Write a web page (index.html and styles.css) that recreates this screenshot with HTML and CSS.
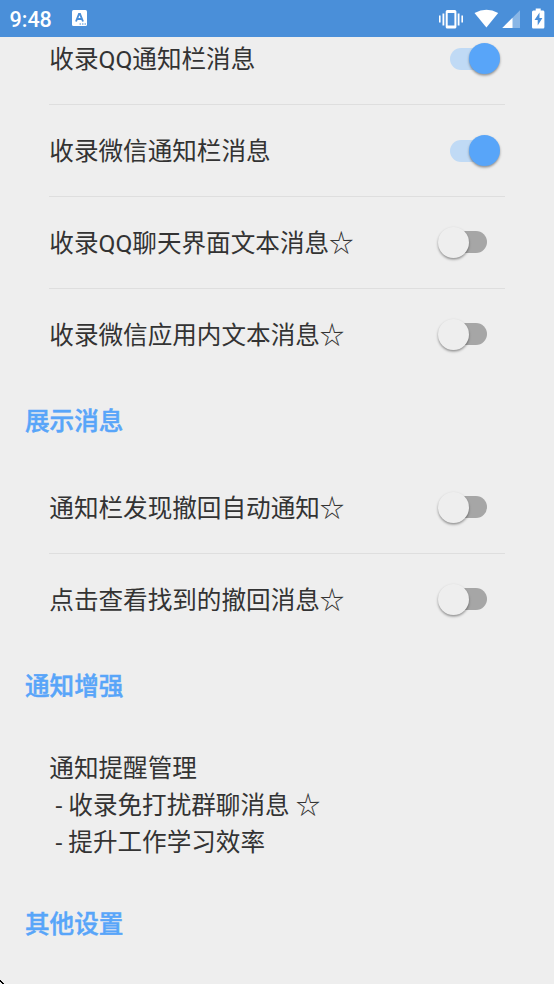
FILE: index.html
```html
<!DOCTYPE html>
<html lang="zh-CN">
<head>
<meta charset="utf-8">
<title>设置</title>
<link rel="stylesheet" href="styles.css">
</head>
<body>
<header class="status">
  <span class="clock">9:48</span>
  <svg class="app-icon" width="15" height="16" viewBox="0 0 15 16">
    <rect width="15" height="16" rx="1.5" fill="#fff"/>
    <path d="M4 11.500 7 4h1l3 7.500M5.200 9h4.600" fill="none" stroke="#4a8fd9" stroke-width="1.900"/>
    <path d="M7.500 14h1.500m1 0h1.500m1 0h1.500" stroke="#4a8fd9" stroke-width="1.200"/>
  </svg>
  <svg class="indicators" width="108" height="22" viewBox="0 0 108 22">
    <g fill="#fff">
      <path d="M1 7.500h1.600v7H1zM4.500 5.500h1.800v12H4.500zM19.700 5.500h1.800v12h-1.800zM23.400 7.500H25v7h-1.600z"/>
      <path fill-rule="evenodd" d="M9.300 2h7.500q1.600 0 1.600 1.600v15.300q0 1.600-1.600 1.600H9.300q-1.600 0-1.600-1.600V3.600Q7.700 2 9.300 2zM9.700 5v12.500h6.700V5z"/>
      <path d="M36.500 5Q48.500-1.500 60.200 5L48.400 19.500z"/>
      <path opacity=".35" d="M82 2.300V20H64.300z"/>
      <path d="M74.500 9.800V20H64.300z"/>
      <path transform="translate(.7 0)" fill-rule="evenodd" d="M97 .5h5v2h2.500q1.200 0 1.200 1.500v15q0 1.500-1.200 1.500h-10q-1.200 0-1.200-1.500V4q0-1.500 1.500-1.500H97zM100.800 4.500 95.800 12h3.200v5.500l4.700-7.500h-2.900z"/>
    </g>
  </svg>
</header>
<main class="settings">
  <section class="group group-scrolled">
    <div class="row"><span>收录QQ通知栏消息</span><i class="switch on"></i></div>
    <div class="row"><span>收录微信通知栏消息</span><i class="switch on"></i></div>
    <div class="row"><span>收录QQ聊天界面文本消息☆</span><i class="switch"></i></div>
    <div class="row"><span>收录微信应用内文本消息☆</span><i class="switch"></i></div>
  </section>
  <h2>展示消息</h2>
  <section class="group">
    <div class="row"><span>通知栏发现撤回自动通知☆</span><i class="switch"></i></div>
    <div class="row"><span>点击查看找到的撤回消息☆</span><i class="switch"></i></div>
  </section>
  <h2>通知增强</h2>
  <p class="note">通知提醒管理
 - 收录免打扰群聊消息 ☆
 - 提升工作学习效率</p>
  <h2>其他设置</h2>
</main>
<svg class="corner" width="4" height="4" viewBox="0 0 4 4"><path d="M0 0h1v1h1v1h1v1h1v1H2V3H1V2H0z"/></svg>
</body>
</html>
```
FILE: styles.css
```css
* { box-sizing: border-box; }
body {
  margin: 0;
  height: 984px;
  overflow: hidden;
  background: #eee;
  color: #333;
  font: 24.6px/36.6px Roboto, "Noto Sans CJK SC", sans-serif;
}
.status {
  display: flex;
  align-items: center;
  position: relative;
  z-index: 1;
  height: 37px;
  padding: 0 8px 0 9.5px;
  background: #4a8fd9;
  color: #fff;
}
.clock { width: 62.5px; font-size: 21.5px; font-weight: 500; line-height: 37px; padding-top: 1px; }
.app-icon { margin-top: -1px; }
.indicators { margin-left: auto; }
.group { padding: 0 49px; }
.group-scrolled { margin-top: -23.7px; }
.row {
  display: flex;
  align-items: center;
  justify-content: space-between;
  height: 91.8px;
  padding: 0 18px 0 .3px;
  border-bottom: 1.5px solid #dedede;
}
.row span { padding-top: 3.4px; }
.row:last-child { border-bottom-color: transparent; }
.switch {
  position: relative;
  width: 37px;
  height: 22px;
  border-radius: 11px;
  background: #a6a6a6;
}
.switch::after {
  content: "";
  position: absolute;
  left: -12px;
  top: -4.5px;
  width: 31px;
  height: 31px;
  border-radius: 50%;
  background: #eee;
  box-shadow: 0 1.5px 2.5px rgba(0, 0, 0, .4);
}
.switch.on { background: #c0daf5; }
.switch.on::after { left: 18.5px; background: #58a5f9; }
h2 {
  margin: 0;
  height: 81.6px;
  padding-left: 25px;
  color: #58a5f9;
  font-size: 24.6px;
  font-weight: 500;
  line-height: 81.6px;
  -webkit-text-stroke: .45px #58a5f9;
}
.note {
  margin: 0;
  padding: 24.2px 49.3px 22.6px;
  white-space: pre-wrap;
}
.corner { position: absolute; left: 0; bottom: 0; }
```
